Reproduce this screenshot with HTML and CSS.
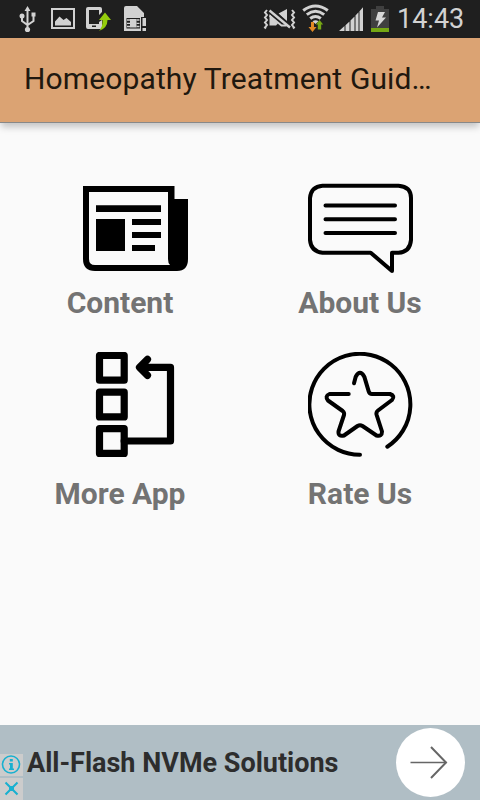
FILE: index.html
```html
<!DOCTYPE html>
<html lang="en">
<head>
	<meta charset="UTF-8">
	<meta name="viewport" content="width=device-width, initial-scale=1.0">
	<title>Homeopathy Treatment Guide</title>
	<link rel="stylesheet" href="styles.css">
</head>
<body>
	<div class="statusbar">
		<svg class="status-left" width="160" height="38" viewBox="0 0 160 38">
			<!-- usb -->
			<g fill="none" stroke="#d2d2d2" stroke-width="2">
				<path d="M27.500 10v19M22 17v4l5.500 4 6-4v-5"/>
			</g>
			<path fill="#d2d2d2" d="M27.500 6l3 5h-6zM31.500 12.500h4v4h-4z"/>
			<circle cx="22" cy="16" r="2.500" fill="#d2d2d2"/>
			<circle cx="27.500" cy="29.500" r="2.600" fill="#d2d2d2"/>
			<!-- picture -->
			<rect x="52" y="9" width="22" height="19" fill="none" stroke="#d2d2d2" stroke-width="2"/>
			<path fill="#d2d2d2" d="M55 25.500v-4l4.500-5 4 3.500 3-2 4.500 4v3.500z"/>
			<!-- phone update -->
			<path fill="#d2d2d2" fill-rule="evenodd" d="M88 7h12q2 0 2 2v3l-3 3v-5H89v14h10v-2l3-2v7q0 2-2 2H88q-2 0-2-2V9q0-2 2-2zM92 25.500v1.500h4v-1.500z"/>
			<path fill="#94cc0c" d="M105 12.500l6 7.500h-3.500q0 8-8.500 11 4-4 3.500-11H99z"/>
			<!-- sim card -->
			<path fill="#d2d2d2" fill-rule="evenodd" d="M126 6h11l7 7v4h-3v14h-17V8q0-2 2-2zM126.500 18v10.500h13.500V18z"/>
			<path fill="none" stroke="#d2d2d2" stroke-width="1.300" d="M127 20h3M127 23.300h3M127 26.500h3M136.500 20h3M136.500 23.300h3M136.500 26.500h3"/>
			<rect x="130" y="19" width="6.500" height="8.500" fill="#d2d2d2"/>
			<path fill="#d2d2d2" d="M142.500 18h3.500v8h-3.500zM142.500 28h3.500v3h-3.500z"/>
		</svg>
		<div class="status-right">
			<svg width="130" height="38" viewBox="260 0 130 38">
				<!-- muted speaker -->
				<path fill="#d2d2d2" d="M269.500 14v11.500h6.500l2-2zM278.500 13.500l8.500-4.500v13z"/>
				<path fill="none" stroke="#1f1f1f" stroke-width="6" d="M269 9.500l21 18"/>
				<path fill="none" stroke="#d2d2d2" stroke-width="2.400" d="M269.500 10.500l20.500 17"/>
				<path fill="none" stroke="#d2d2d2" stroke-width="1.800" d="M269.500 15.500l12 10h5"/>
				<path fill="none" stroke="#d2d2d2" stroke-width="2" d="M267 10l-2 2.500 2 2.500-2 2.500 2 2.500-2 2.500 2 2.500-2 2.500 1 1M292 10l2 2.500-2 2.500 2 2.500-2 2.500 2 2.500-2 2.500 2 2.500-1 1"/>
				<!-- wifi -->
				<g fill="none" stroke="#d2d2d2" stroke-width="3">
					<path d="M303.200 10.500q12.300-9 24.600 0M306.800 14.600q8.700-6.600 17.400 0M310.200 18.500q5.300-4 10.600 0"/>
				</g>
				<path fill="#d2d2d2" d="M312.500 21.300q3-2 6 0l-3 2.700z"/>
				<path fill="#e28a24" d="M311 22h3v5h2.500l-4 5-4-5h2.500z"/>
				<path fill="#76a714" d="M319.500 20l3.700 4.500h-2v5h-3.400v-5h-2z"/>
				<!-- signal -->
				<path fill="#d2d2d2" d="M339 31l5.500-5V31zM345.500 25.300l4-3.800v9.500h-4zM350.500 20.500l4-4V31h-4zM355.500 15.500l3-3.300V31h-3zM359.500 11.200l3.500-4V31h-3.500z"/>
				<!-- battery -->
				<path fill="#404040" d="M376 6h8v3h5v19h-18V9h5z"/>
				<path fill="#76a714" d="M371 28h18v4h-18z"/>
				<path fill="#d8d8d8" d="M378 12h7l-3 5.500h4l-9 10 2-7h-3.500z"/>
			</svg>
			<span class="clock">14:43</span>
		</div>
	</div>

	<header class="toolbar">
		<h1 class="toolbar-title">Homeopathy Treatment Guid…</h1>
	</header>

	<main class="menu">
		<a class="item left">
			<svg class="icon" viewBox="0 0 105 105">
				<path fill-rule="evenodd" d="M0 10h91.500v13H105v60q0 12-11 12H12Q0 95 0 83zM6 16v67q0 6 6 6h75q-2-2-2-6V16z"/>
				<path d="M13 29.300h65V36H13zM13 43h29v32H13zM49 43h29v6H49zM49 56h29v6H49zM49 69h23v6H49z"/>
			</svg>
			<span class="label">Content</span>
		</a>
		<a class="item">
			<svg class="icon line" viewBox="0 0 105 105">
				<path d="M14.500 9.700h76Q103 10.500 103 22v42q-1 12-12.500 12.700H84V95L62.700 76.700H14.500Q3 75.500 2 64V22Q3 10.500 14.500 9.700z"/>
				<path d="M17.500 29.600h69.500M17.500 43.200h69.500M17.500 56.900h69.500"/>
			</svg>
			<span class="label">About Us</span>
		</a>
		<a class="item left">
			<svg class="icon thick" viewBox="0 0 105 105">
				<rect x="16.500" y="3.500" width="24.700" height="24.700"/>
				<rect x="16.500" y="40.200" width="24.700" height="24.700"/>
				<rect x="16.500" y="76.700" width="24.700" height="24.700"/>
				<path d="M41.200 89h46.300V15.400H57M64.500 7.400l-8 8 8 8"/>
			</svg>
			<span class="label">More App</span>
		</a>
		<a class="item">
			<svg class="icon line" viewBox="0 0 105 105">
				<path d="M52 102.800A50.500 50.500 0 1 1 79.300 94.700"/>
				<path d="M46 31.300l1.700-6.600q4.300-8 8.600 0L60.700 39.300Q61.500 42 64 42H82q5.500 2 2 6L70 58.500q-2 1.500-1.500 4L74 79.500q0 5.500-5.500 4L54.500 74q-2.500-1.500-5 0L36 83.500q-6 1.500-5.500-4L36 63q.6-2.500-1.300-4L20 48.500q-3.500-4.500 1.500-6.500h19.200"/>
			</svg>
			<span class="label">Rate Us</span>
		</a>
	</main>

	<footer class="ad">
		<div class="ad-choices">
			<svg width="23" height="22" viewBox="0 0 23 22">
				<circle cx="11" cy="10.500" r="8.500" fill="none" stroke="#18b0d0" stroke-width="1.600"/>
				<path fill="#18b0d0" d="M9.800 5h3v2.500h-3zM9 9h3.800v5.500H14V16H9v-1.500h1v-4H9z"/>
			</svg>
			<svg width="23" height="22" viewBox="0 0 23 22">
				<path fill="none" stroke="#18b0d0" stroke-width="2" d="M5.500 4.500l12 12M17.500 4.500l-12 12"/>
				<path fill="#18b0d0" d="M9 8h5v5H9z"/>
			</svg>
		</div>
		<span class="ad-text">All-Flash NVMe Solutions</span>
		<span class="ad-go">
			<svg width="69" height="69" viewBox="0 0 69 69" fill="none" stroke="#666">
				<path stroke-width="1.400" d="M14.500 34.500h36"/>
				<path stroke-width="2" d="M35 19l15 15.500L35 50"/>
			</svg>
		</span>
	</footer>
</body>
</html>
```
FILE: styles.css
```css
* {
	box-sizing: border-box;
}

body {
	margin: 0;
	height: 800px;
	display: flex;
	flex-direction: column;
	background: #fafafa;
	font-family: Roboto, sans-serif;
	overflow: hidden;
}

svg {
	display: block;
	flex: none;
}

.statusbar {
	height: 38px;
	display: flex;
	justify-content: space-between;
	background: #1f1f1f;
}

.status-right {
	display: flex;
	width: 220px;
}

.clock {
	padding-left: 7px;
	font-size: 27px;
	line-height: 38px;
	color: #d2d2d2;
}

/* no shadow above the bar, only below */
.toolbar {
	height: 85px;
	padding-left: 24px;
	background: #dba373;
	border-bottom: 1px solid #888;
	box-shadow: 0 5px 7px -1px rgba(0, 0, 0, 0.22);
}

.toolbar-title {
	margin: 0;
	font-size: 30px;
	font-weight: 400;
	letter-spacing: 0.13px;
	line-height: 82px;
	white-space: nowrap;
	color: #20180f;
}

.menu {
	flex: 1;
	display: grid;
	grid-template-columns: 240px 240px;
	grid-template-rows: 176px 176px;
	padding-top: 53px;
}

.item {
	display: flex;
	flex-direction: column;
	align-items: center;
}

.item:nth-child(n+3) .label {
	margin-top: 19px;
}

.icon {
	width: 105px;
	height: 105px;
}

.left .icon {
	margin-left: 31px;
}

.line {
	fill: none;
	stroke: #000;
	stroke-width: 4;
	stroke-linecap: round;
	stroke-linejoin: round;
}

.thick {
	fill: none;
	stroke: #000;
	stroke-width: 7.200;
	stroke-linecap: round;
	stroke-linejoin: round;
}

.label {
	margin-top: 4px;
	font-size: 30px;
	font-weight: 700;
	line-height: 36px;
	color: #737373;
}

.ad {
	height: 75px;
	display: flex;
	align-items: center;
	padding-right: 15px;
	background: #b0bec5;
}

.ad-choices {
	align-self: flex-end;
	display: flex;
	flex-direction: column;
	gap: 2px;
}

.ad-choices svg {
	background: #ccc;
}

.ad-text {
	flex: 1;
	padding-left: 4px;
	font-size: 27px;
	font-weight: 700;
	white-space: nowrap;
	color: #2d2d2d;
}

.ad-go {
	border-radius: 50%;
	background: #fff;
}
```
